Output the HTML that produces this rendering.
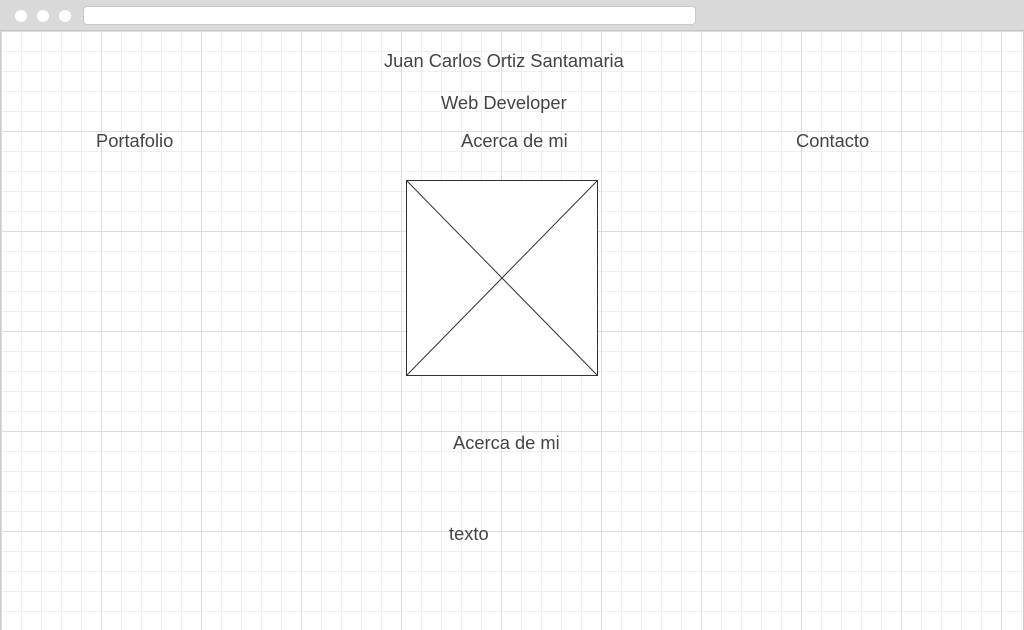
<!DOCTYPE html>
<html><head><style>
body{margin:0;width:1024px;height:630px;overflow:hidden;background:#fff;font-family:"Liberation Sans",sans-serif;position:relative}
.bar{position:absolute;left:0;top:0;width:1024px;height:31px;background:#dadada;border-bottom:1px solid #c8c8c8;box-sizing:border-box}
.dot{position:absolute;top:10px;width:12px;height:12px;border-radius:50%;background:#fff}
.addr{position:absolute;left:83px;top:6px;width:613px;height:19px;background:#fff;border-radius:4px;border:1px solid #c8c8c8;box-sizing:border-box}
.grid{position:absolute;left:1px;top:31px;width:1022px;height:599px;
background-image:
linear-gradient(to right,#dcdcdc 1px,transparent 1px),
linear-gradient(to bottom,#dcdcdc 1px,transparent 1px),
linear-gradient(to right,#efefef 1px,transparent 1px),
linear-gradient(to bottom,#efefef 1px,transparent 1px);
background-size:100px 100px,100px 100px,20px 20px,20px 20px;
background-position:0 0}
.edge{position:absolute;top:31px;width:1px;height:599px;background:#ccc}
.t{position:absolute;font-size:18.3px;color:#444;white-space:nowrap}
</style></head><body>
<div class="bar"><div class="dot" style="left:15px"></div><div class="dot" style="left:37px"></div><div class="dot" style="left:59px"></div><div class="addr"></div></div>
<div class="grid"></div>
<div class="edge" style="left:0"></div><div class="edge" style="left:1023px"></div>
<div class="t" style="left:384px;top:50px">Juan Carlos Ortiz Santamaria</div>
<div class="t" style="left:441px;top:92px">Web Developer</div>
<div class="t" style="left:96px;top:130px">Portafolio</div>
<div class="t" style="left:461px;top:130px">Acerca de mi</div>
<div class="t" style="left:796px;top:130px">Contacto</div>
<svg style="position:absolute;left:406px;top:180px" width="193" height="197"><rect x="0.5" y="0.5" width="191" height="195" fill="#fff" stroke="#333"/><line x1="0.5" y1="0.5" x2="191.5" y2="195.5" stroke="#333"/><line x1="191.5" y1="0.5" x2="0.5" y2="195.5" stroke="#333"/></svg>
<div class="t" style="left:453px;top:432px">Acerca de mi</div>
<div class="t" style="left:449px;top:523px">texto</div>
</body></html>
